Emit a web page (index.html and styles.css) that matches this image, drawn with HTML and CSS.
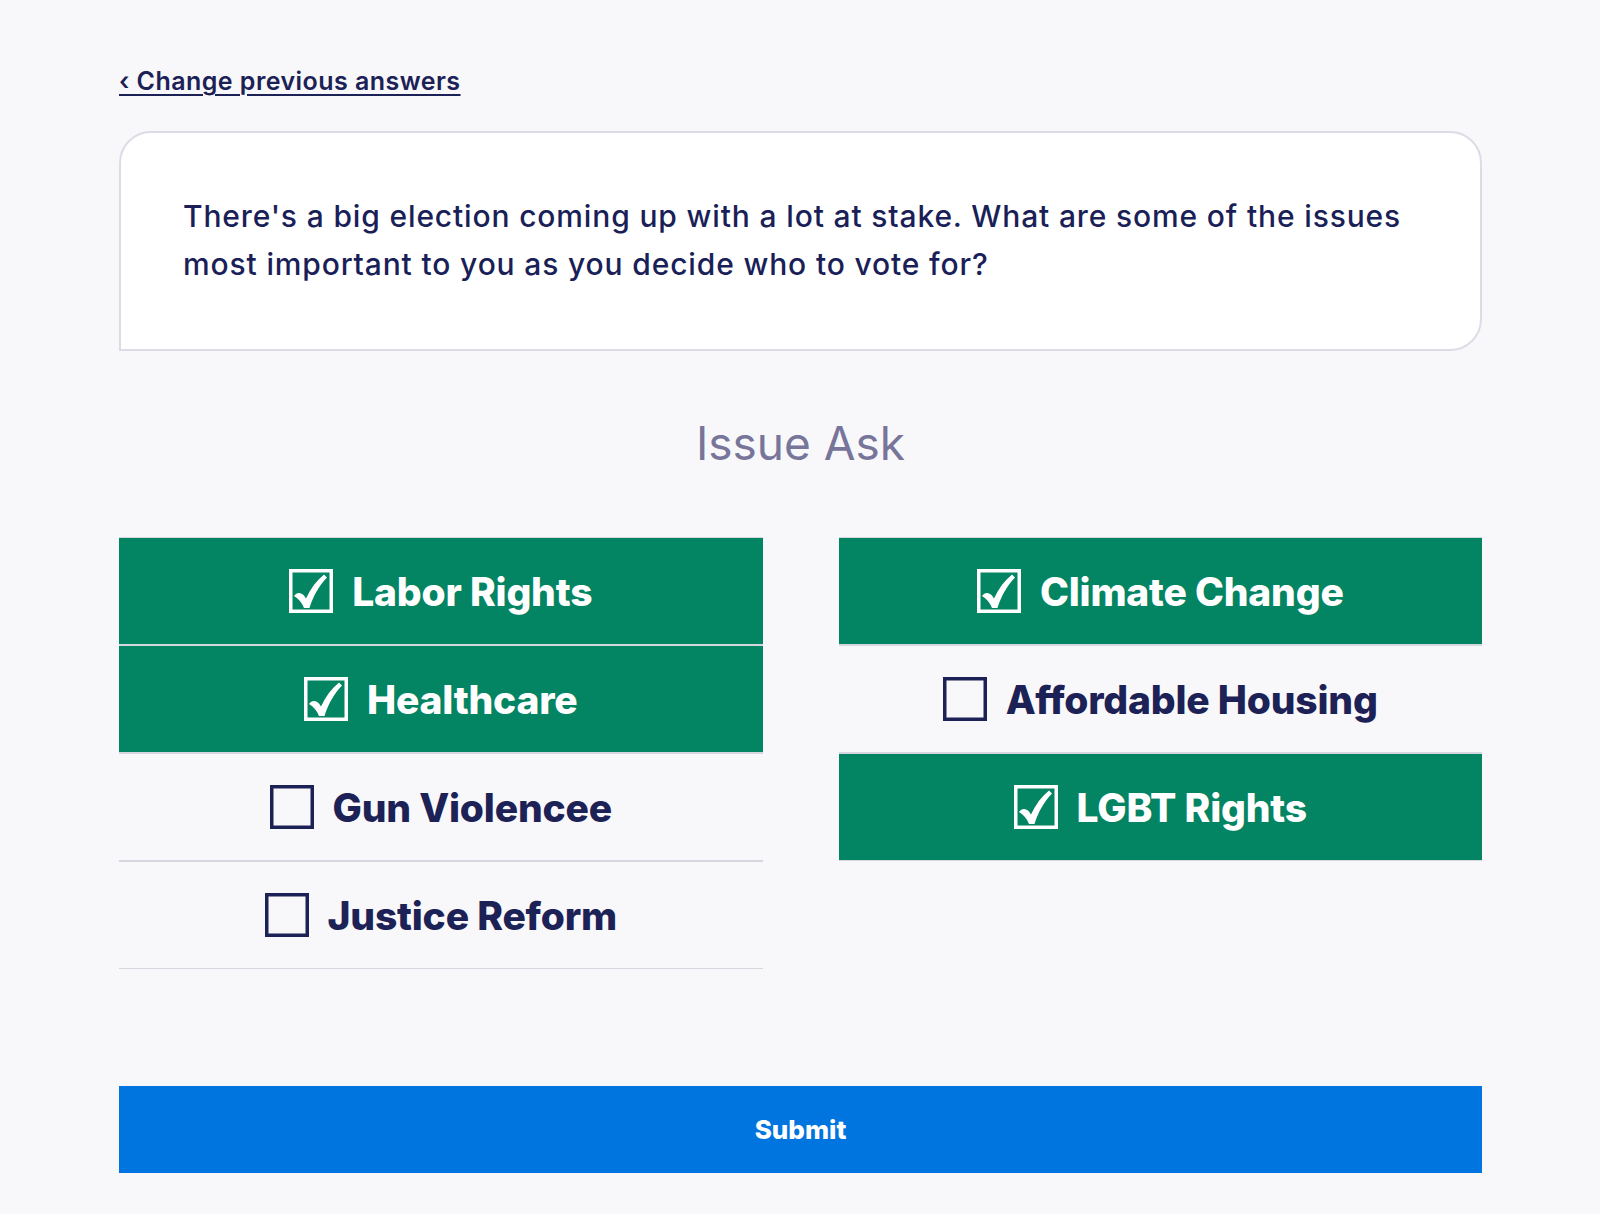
FILE: index.html
```html
<!DOCTYPE html>
<html lang="en">
<head>
<meta charset="utf-8">
<title>Issue Ask</title>
<link rel="stylesheet" href="styles.css">
</head>
<body>
<main class="page">
  <a class="back-link" href="#">‹ Change previous answers</a>

  <section class="question-card">
    <p class="question-text">There's a big election coming up with a lot at stake. What are some of the issues most important to you as you decide who to vote for?</p>
  </section>

  <h1 class="section-title">Issue Ask</h1>

  <div class="options">
    <div class="option-col">
      <div class="option checked">
        <svg class="box" viewBox="0 0 44 44"><rect x="1.75" y="1.75" width="40.5" height="40.5" fill="none" stroke="currentColor" stroke-width="3.5"/><path d="M5,27 C7.5,23 12,23 15,26.5 L17,29.5 C21.5,19.5 27.5,11.5 35,5.5 L38,8.5 C30.5,16.5 24.5,26 20.5,39 L15,39 C13,34 9.5,29.5 5,27 Z" fill="currentColor"/></svg>
        <span class="label">Labor Rights</span>
      </div>
      <div class="option checked">
        <svg class="box" viewBox="0 0 44 44"><rect x="1.75" y="1.75" width="40.5" height="40.5" fill="none" stroke="currentColor" stroke-width="3.5"/><path d="M5,27 C7.5,23 12,23 15,26.5 L17,29.5 C21.5,19.5 27.5,11.5 35,5.5 L38,8.5 C30.5,16.5 24.5,26 20.5,39 L15,39 C13,34 9.5,29.5 5,27 Z" fill="currentColor"/></svg>
        <span class="label">Healthcare</span>
      </div>
      <div class="option">
        <svg class="box" viewBox="0 0 44 44"><rect x="1.75" y="1.75" width="40.5" height="40.5" fill="none" stroke="currentColor" stroke-width="3.5"/></svg>
        <span class="label">Gun Violencee</span>
      </div>
      <div class="option">
        <svg class="box" viewBox="0 0 44 44"><rect x="1.75" y="1.75" width="40.5" height="40.5" fill="none" stroke="currentColor" stroke-width="3.5"/></svg>
        <span class="label">Justice Reform</span>
      </div>
    </div>
    <div class="option-col">
      <div class="option checked">
        <svg class="box" viewBox="0 0 44 44"><rect x="1.75" y="1.75" width="40.5" height="40.5" fill="none" stroke="currentColor" stroke-width="3.5"/><path d="M5,27 C7.5,23 12,23 15,26.5 L17,29.5 C21.5,19.5 27.5,11.5 35,5.5 L38,8.5 C30.5,16.5 24.5,26 20.5,39 L15,39 C13,34 9.5,29.5 5,27 Z" fill="currentColor"/></svg>
        <span class="label">Climate Change</span>
      </div>
      <div class="option">
        <svg class="box" viewBox="0 0 44 44"><rect x="1.75" y="1.75" width="40.5" height="40.5" fill="none" stroke="currentColor" stroke-width="3.5"/></svg>
        <span class="label">Affordable Housing</span>
      </div>
      <div class="option checked">
        <svg class="box" viewBox="0 0 44 44"><rect x="1.75" y="1.75" width="40.5" height="40.5" fill="none" stroke="currentColor" stroke-width="3.5"/><path d="M5,27 C7.5,23 12,23 15,26.5 L17,29.5 C21.5,19.5 27.5,11.5 35,5.5 L38,8.5 C30.5,16.5 24.5,26 20.5,39 L15,39 C13,34 9.5,29.5 5,27 Z" fill="currentColor"/></svg>
        <span class="label">LGBT Rights</span>
      </div>
    </div>
  </div>

  <button class="submit" type="button">Submit</button>
</main>
</body>
</html>
```
FILE: styles.css
```css
* { box-sizing: border-box; }

html, body {
  margin: 0;
  padding: 0;
  background: #f8f8fa;
}

body {
  font-family: Inter, "Noto Sans", "DejaVu Sans", sans-serif;
  color: #1c2156;
}

.page {
  padding: 63px 118px 40px 119px;
  display: flex;
  flex-direction: column;
}

.back-link {
  align-self: flex-start;
  font-size: 25px;
  line-height: 36px;
  font-weight: 600;
  letter-spacing: 0.45px;
  color: #1c2156;
  text-decoration: underline;
  text-decoration-thickness: 2px;
  text-underline-offset: 4px;
}

.question-card {
  margin-top: 32px;
  background: #ffffff;
  border: 2px solid #dcdce6;
  border-radius: 32px 32px 32px 0;
  padding: 59px 62px 61px 62px;
}

.question-text {
  margin: 0;
  font-size: 30px;
  line-height: 48px;
  font-weight: 500;
  letter-spacing: 0.85px;
  color: #1a1f58;
}

.section-title {
  margin: 65px 0 0;
  text-align: center;
  font-size: 46px;
  line-height: 55px;
  font-weight: 400;
  color: #77759a;
}

.options {
  margin-top: 66px;
  display: grid;
  grid-template-columns: 1fr 1fr;
  column-gap: 76px;
  align-items: start;
}

.option-col {
  display: flex;
  flex-direction: column;
}

.option {
  height: 108px;
  border-top: 1px solid #d6d6df;
  border-bottom: 1px solid #d6d6df;
  display: flex;
  align-items: center;
  justify-content: center;
  gap: 19px;
  color: #1c2156;
}

.option.checked {
  background: #038462;
  color: #ffffff;
}

.box {
  width: 44px;
  height: 44px;
  flex: none;
}

.label {
  font-size: 39px;
  line-height: 1;
  font-weight: 800;
  letter-spacing: -0.2px;
}

.submit {
  margin-top: 117px;
  height: 87px;
  border: none;
  background: #0075e0;
  color: #ffffff;
  font-family: Inter, "Noto Sans", "DejaVu Sans", sans-serif;
  font-size: 26px;
  font-weight: 800;
  cursor: pointer;
}
```
